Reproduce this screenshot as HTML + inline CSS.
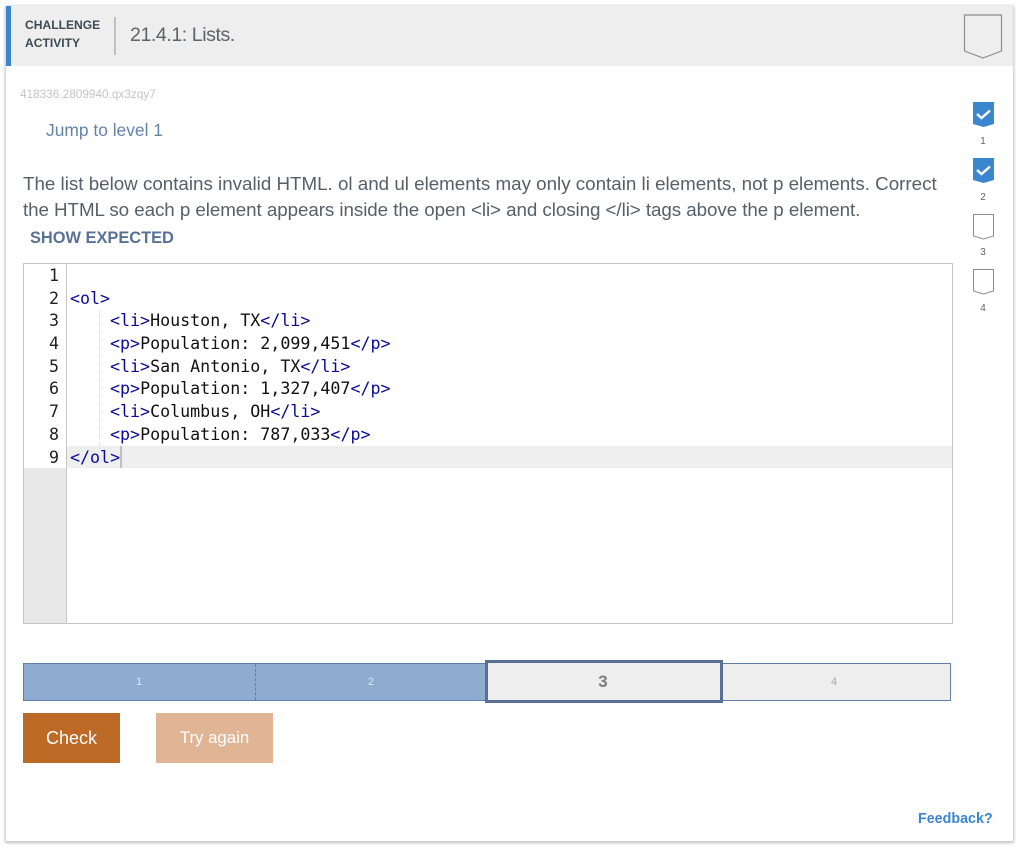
<!DOCTYPE html>
<html><head><meta charset="utf-8"><title>Challenge activity</title>
<style>
html,body{margin:0;padding:0;background:#fff;width:1024px;height:850px;overflow:hidden;font-family:"Liberation Sans",sans-serif}
.a{position:absolute;white-space:nowrap}
#card{position:absolute;left:6px;top:6px;width:1007px;height:835px;background:#fff;box-shadow:0 1px 3px 1px rgba(0,0,0,.25)}
.ln{position:absolute;left:24px;width:35px;text-align:right;font-family:"DejaVu Sans Mono",monospace;font-size:16.65px;line-height:22.75px;color:#222}
.cl{position:absolute;white-space:pre;font-family:"DejaVu Sans Mono",monospace;font-size:16.65px;line-height:22.75px;color:#111}
.cl b{font-weight:normal;color:#0a0a9a}
.n{position:absolute;width:20px;text-align:center;font-size:10px;color:#666}
</style></head><body>
<div id="card"></div>
<div class="a" style="left:6px;top:6px;width:1007px;height:60px;background:#eeeeee"></div>
<div class="a" style="left:6px;top:6px;width:5px;height:60px;background:#3a86cf"></div>
<div class="a" style="left:25px;top:16px;font-size:12.1px;font-weight:bold;line-height:18px;color:#3c4a54">CHALLENGE<br>ACTIVITY</div>
<div class="a" style="left:114px;top:17px;width:2px;height:38px;background:#c0c0c0"></div>
<div class="a" style="left:130px;top:24px;font-size:19.6px;letter-spacing:-.45px;line-height:23px;color:#5a646c">21.4.1: Lists.</div>
<svg class="a" style="left:963px;top:13px" width="40" height="47"><path d="M1.5 2H38.5V38L20 45L1.5 38Z" fill="none" stroke="#8c8c8c" stroke-width="1.2"/></svg>

<div class="a" style="left:20px;top:87px;font-size:11.8px;line-height:14px;color:#c4c4c4">418336.2809940.qx3zqy7</div>
<div class="a" style="left:46px;top:120px;font-size:17.4px;line-height:20px;color:#6484ab">Jump to level 1</div>

<svg class="a" style="left:972px;top:101px" width="24" height="27"><path d="M1 1H22V23L11.5 26L1 23Z" fill="#3a86cf"/><path d="M5 13L9.5 17L18 9.5" fill="none" stroke="#fff" stroke-width="2.4"/></svg>
<div class="n" style="left:973px;top:136px">1</div>
<svg class="a" style="left:972px;top:157px" width="24" height="27"><path d="M1 1H22V23L11.5 26L1 23Z" fill="#3a86cf"/><path d="M5 13L9.5 17L18 9.5" fill="none" stroke="#fff" stroke-width="2.4"/></svg>
<div class="n" style="left:973px;top:192px">2</div>
<svg class="a" style="left:972px;top:213px" width="24" height="27"><path d="M1.5 1.5H21.5V23L11.5 26L1.5 23Z" fill="none" stroke="#8c8c8c" stroke-width="1"/></svg>
<div class="n" style="left:973px;top:247px">3</div>
<svg class="a" style="left:972px;top:268px" width="24" height="27"><path d="M1.5 1.5H21.5V23L11.5 26L1.5 23Z" fill="none" stroke="#8c8c8c" stroke-width="1"/></svg>
<div class="n" style="left:973px;top:303px">4</div>

<div class="a" style="left:23px;top:171px;font-size:18.78px;line-height:26px;color:#566069">The list below contains invalid HTML. ol and ul elements may only contain li elements, not p elements. Correct<br><span style="letter-spacing:-.06px">the HTML so each p element appears inside the open &lt;li&gt; and closing &lt;/li&gt; tags above the p element.</span></div>
<div class="a" style="left:30px;top:229px;font-size:16.4px;font-weight:bold;line-height:19px;color:#5a7196">SHOW EXPECTED</div>

<div class="a" style="left:23px;top:263px;width:928px;height:359px;border:1px solid #c6c6c6;background:#fff"></div>
<div class="a" style="left:24px;top:468px;width:42px;height:155px;background:#e8e8e8"></div>
<div class="a" style="left:66px;top:264px;width:1px;height:359px;background:#c6c6c6"></div>
<div class="a" style="left:67px;top:446px;width:885px;height:22px;background:#eeeeee"></div>
<div class="a" style="left:99px;top:311px;width:0;height:135px;border-left:1px dotted #d8d8d8"></div>
<div class="a" style="left:120px;top:446px;width:2px;height:22px;background:#c0c0c0"></div>

<div class="ln" style="top:265px">1</div>
<div class="ln" style="top:288px">2</div>
<div class="ln" style="top:310px">3</div>
<div class="ln" style="top:333px">4</div>
<div class="ln" style="top:356px">5</div>
<div class="ln" style="top:378px">6</div>
<div class="ln" style="top:401px">7</div>
<div class="ln" style="top:424px">8</div>
<div class="ln" style="top:447px">9</div>

<div class="cl" style="left:70px;top:288px"><b>&lt;ol&gt;</b></div>
<div class="cl" style="left:110px;top:310px"><b>&lt;li&gt;</b>Houston, TX<b>&lt;/li&gt;</b></div>
<div class="cl" style="left:110px;top:333px"><b>&lt;p&gt;</b>Population: 2,099,451<b>&lt;/p&gt;</b></div>
<div class="cl" style="left:110px;top:356px"><b>&lt;li&gt;</b>San Antonio, TX<b>&lt;/li&gt;</b></div>
<div class="cl" style="left:110px;top:378px"><b>&lt;p&gt;</b>Population: 1,327,407<b>&lt;/p&gt;</b></div>
<div class="cl" style="left:110px;top:401px"><b>&lt;li&gt;</b>Columbus, OH<b>&lt;/li&gt;</b></div>
<div class="cl" style="left:110px;top:424px"><b>&lt;p&gt;</b>Population: 787,033<b>&lt;/p&gt;</b></div>
<div class="cl" style="left:70px;top:447px"><b>&lt;/ol&gt;</b></div>

<div class="a" style="left:23px;top:663px;width:926px;height:36px;border:1px solid #5f7fa6;background:#eeeeee"></div>
<div class="a" style="left:24px;top:664px;width:462px;height:36px;background:#8eacd0"></div>
<div class="a" style="left:255px;top:664px;width:0;height:36px;border-left:1px dashed #5f7fa6"></div>
<div class="a" style="left:485px;top:660px;width:232px;height:37px;border:3px solid #5a6f94;background:#eeeeee"></div>
<div class="a" style="left:129px;top:676px;width:20px;text-align:center;font-size:11px;color:#dfe7f1">1</div>
<div class="a" style="left:361px;top:676px;width:20px;text-align:center;font-size:11px;color:#dfe7f1">2</div>
<div class="a" style="left:593px;top:672px;width:20px;text-align:center;font-size:17px;font-weight:bold;color:#7c7c7c">3</div>
<div class="a" style="left:824px;top:676px;width:20px;text-align:center;font-size:11px;color:#a8a8a8">4</div>

<div class="a" style="left:23px;top:713px;width:97px;height:50px;background:#bd6a26;color:#fff;font-size:18px;line-height:50px;text-align:center">Check</div>
<div class="a" style="left:156px;top:713px;width:117px;height:50px;background:#dfb595;color:#fff;font-size:16.8px;line-height:50px;text-align:center">Try again</div>

<div class="a" style="left:918px;top:810px;font-size:14.3px;font-weight:bold;line-height:18px;color:#3a86cf">Feedback?</div>
</body></html>
